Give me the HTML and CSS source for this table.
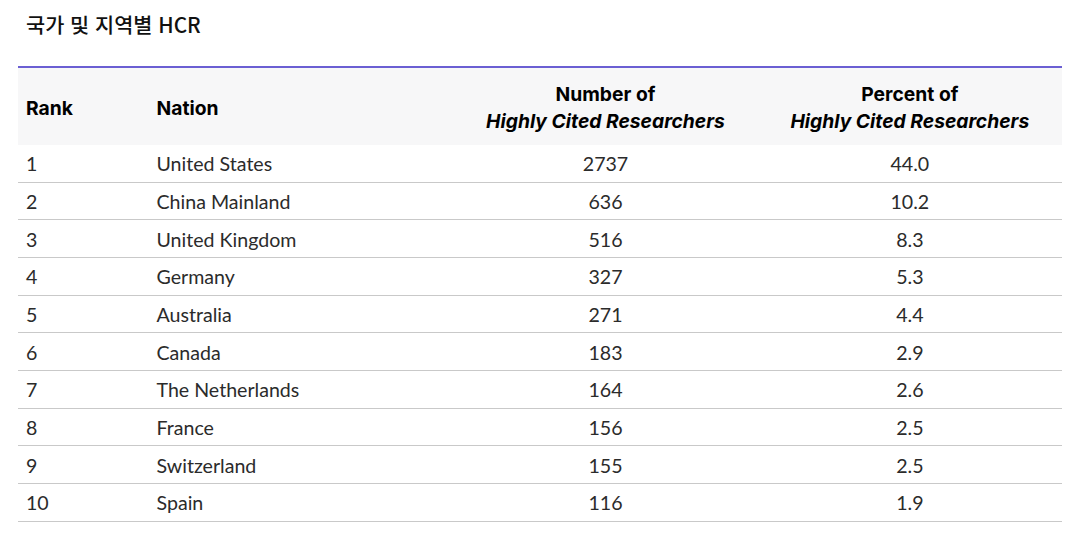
FILE: index.html
```html
<!DOCTYPE html>
<html lang="ko">
<head>
<meta charset="utf-8">
<link rel="stylesheet" href="styles.css">
</head>
<body>
<div class="page">
  <h2 class="title">국가 및 지역별 HCR</h2>
  <table class="hcr">
    <colgroup>
      <col class="c-rank"><col class="c-nation"><col class="c-num"><col class="c-pct">
    </colgroup>
    <thead>
      <tr>
        <th class="left">Rank</th>
        <th class="left">Nation</th>
        <th class="center">Number of<br><em>Highly Cited Researchers</em></th>
        <th class="center">Percent of<br><em>Highly Cited Researchers</em></th>
      </tr>
    </thead>
    <tbody>
      <tr><td>1</td><td>United States</td><td class="center">2737</td><td class="center">44.0</td></tr>
      <tr><td>2</td><td>China Mainland</td><td class="center">636</td><td class="center">10.2</td></tr>
      <tr><td>3</td><td>United Kingdom</td><td class="center">516</td><td class="center">8.3</td></tr>
      <tr><td>4</td><td>Germany</td><td class="center">327</td><td class="center">5.3</td></tr>
      <tr><td>5</td><td>Australia</td><td class="center">271</td><td class="center">4.4</td></tr>
      <tr><td>6</td><td>Canada</td><td class="center">183</td><td class="center">2.9</td></tr>
      <tr><td>7</td><td>The Netherlands</td><td class="center">164</td><td class="center">2.6</td></tr>
      <tr><td>8</td><td>France</td><td class="center">156</td><td class="center">2.5</td></tr>
      <tr><td>9</td><td>Switzerland</td><td class="center">155</td><td class="center">2.5</td></tr>
      <tr><td>10</td><td>Spain</td><td class="center">116</td><td class="center">1.9</td></tr>
    </tbody>
  </table>
</div>
</body>
</html>
```

FILE: styles.css
```css
html, body {
  margin: 0;
  padding: 0;
  background: #ffffff;
}
body {
  font-family: Lato, "Noto Sans CJK KR", sans-serif;
  color: #2a2a2a;
}
.page {
  padding: 0 10px 0 18px;
}
.title {
  margin: 0;
  padding: 9px 8px 0;
  height: 57px;
  font-size: 20.8px;
  line-height: 30px;
  font-weight: 500;
  color: #111;
  font-family: "Noto Sans CJK KR", "Noto Sans", sans-serif;
}
.hcr {
  width: 100%;
  border-collapse: collapse;
  table-layout: fixed;
  border-top: 2px solid #6b5fd3;
}
.c-rank { width: 12.5%; }
.c-nation { width: 29.2%; }
.c-num { width: 29.15%; }
.c-pct { width: 29.15%; }
.hcr thead th {
  background: #f7f7f8;
  padding: 13px 8px 10px;
  font-family: Inter, Lato, sans-serif;
  font-size: 19.3px;
  line-height: 27px;
  font-weight: 700;
  color: #000;
}
.hcr thead em {
  font-style: italic;
}
.left { text-align: left; }
.center { text-align: center; }
.hcr tbody td {
  padding: 7px 8px 5px;
  height: 24.67px;
  line-height: 24px;
  font-size: 19.6px;
  font-weight: 400;
  color: #2b2b2b;
  border-bottom: 1px solid #c9c9c9;
}
```
